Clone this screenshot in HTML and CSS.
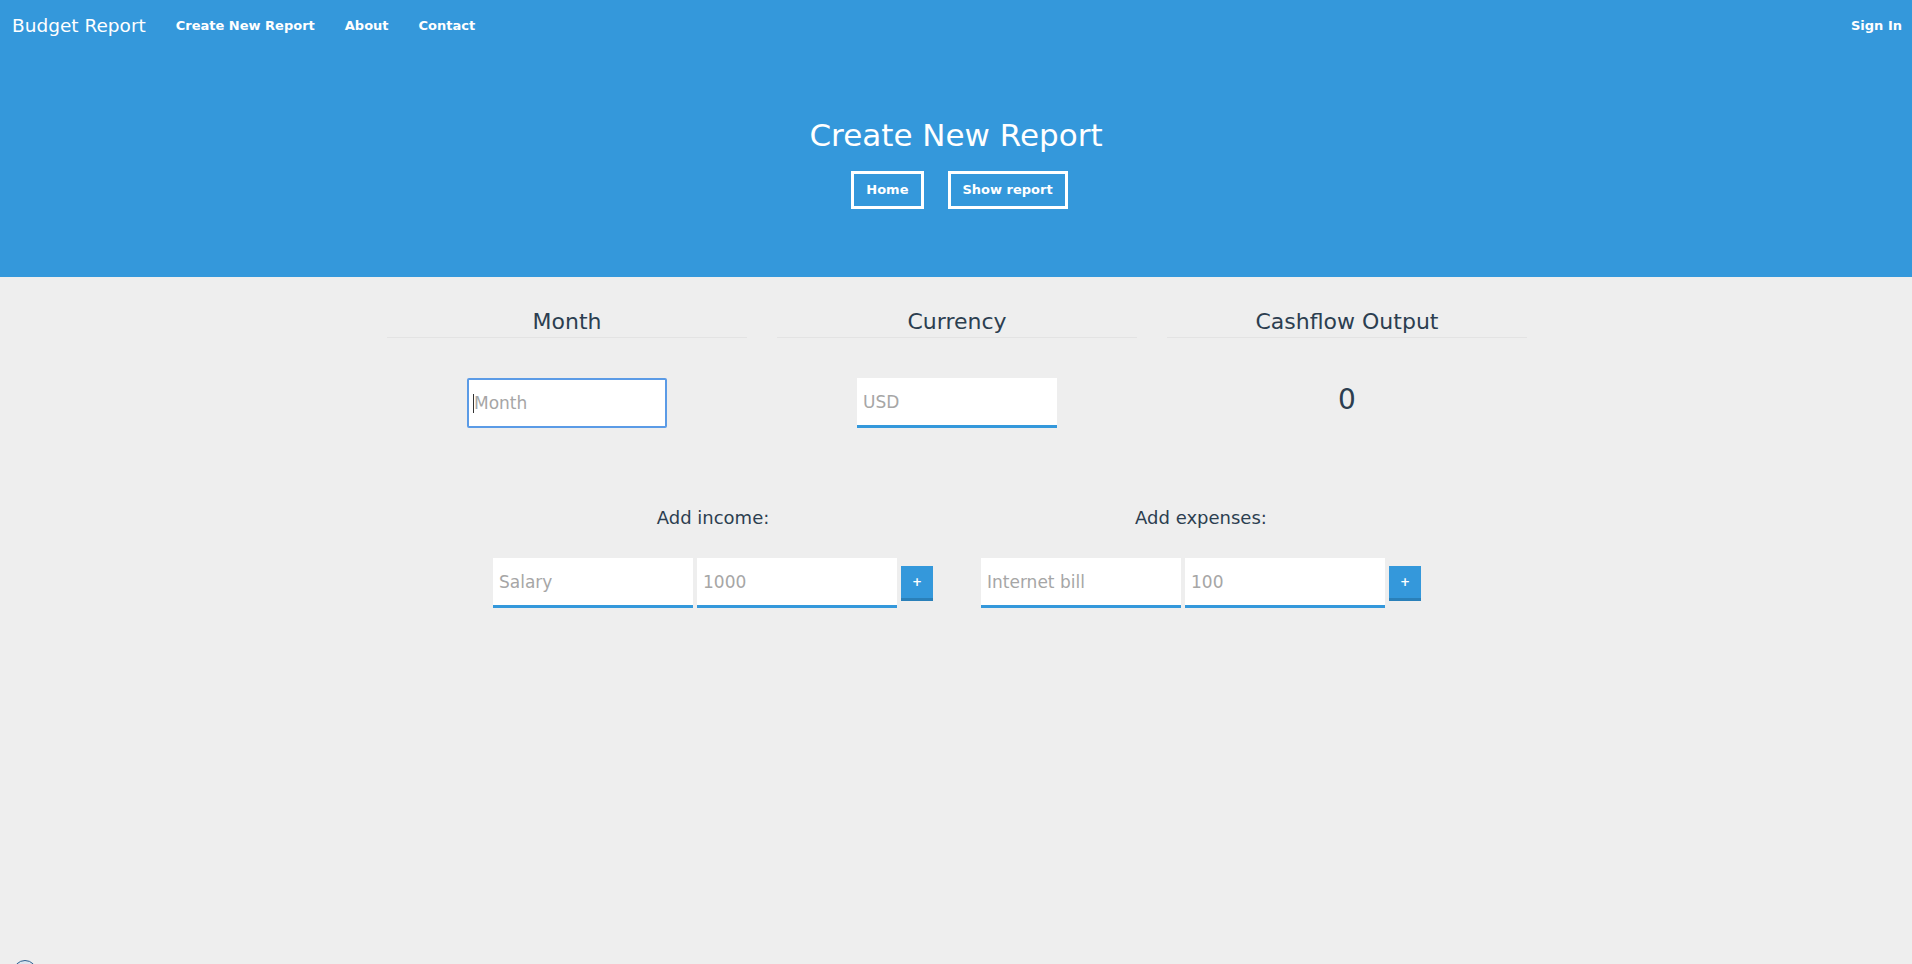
FILE: index.html
```html
<!DOCTYPE html>
<html lang="en">
<head>
<meta charset="utf-8">
<title>Budget Report</title>
<link rel="stylesheet" href="styles.css">
</head>
<body>
<header class="hero">
  <nav class="navbar">
    <a class="brand" href="#">Budget Report</a>
    <ul class="nav-links">
      <li><a href="#">Create New Report</a></li>
      <li><a href="#">About</a></li>
      <li><a href="#">Contact</a></li>
    </ul>
    <a class="sign-in" href="#">Sign In</a>
  </nav>
  <div class="hero-body">
    <h1 class="hero-title">Create New Report</h1>
    <div class="hero-actions">
      <a class="btn-outline" href="#">Home</a>
      <a class="btn-outline" href="#">Show report</a>
    </div>
  </div>
</header>

<main class="main">
  <section class="summary">
    <div class="summary-col">
      <h3 class="col-title">Month</h3>
      <div class="col-body">
        <span class="focus-wrap"><input class="field field-focused" type="text" placeholder="Month"></span>
      </div>
    </div>
    <div class="summary-col">
      <h3 class="col-title">Currency</h3>
      <div class="col-body">
        <input class="field" type="text" placeholder="USD">
      </div>
    </div>
    <div class="summary-col">
      <h3 class="col-title">Cashflow Output</h3>
      <div class="col-body">
        <span class="cashflow">0</span>
      </div>
    </div>
  </section>

  <section class="entries">
    <div class="entry-col">
      <p class="entry-label">Add income:</p>
      <div class="entry-row">
        <input class="field" type="text" placeholder="Salary">
        <input class="field" type="text" placeholder="1000">
        <button class="btn-add" type="button">+</button>
      </div>
    </div>
    <div class="entry-col">
      <p class="entry-label">Add expenses:</p>
      <div class="entry-row">
        <input class="field" type="text" placeholder="Internet bill">
        <input class="field" type="text" placeholder="100">
        <button class="btn-add" type="button">+</button>
      </div>
    </div>
  </section>
</main>

<div class="chat-bubble"></div>
</body>
</html>
```

FILE: styles.css
```css
* {
  box-sizing: border-box;
}

html, body {
  margin: 0;
  padding: 0;
  height: 100%;
}

body {
  background: #eeeeee;
  font-family: "DejaVu Sans", "Liberation Sans", sans-serif;
  color: #2c3e50;
  overflow: hidden;
}

a {
  text-decoration: none;
  color: inherit;
}

/* ---------- header ---------- */
.hero {
  background: #3498db;
  color: #ffffff;
  height: 277px;
}

.navbar {
  height: 50px;
  display: flex;
  align-items: center;
  padding: 0 10px 0 12px;
}

.brand {
  font-size: 18.5px;
  padding-right: 15px;
}

.nav-links {
  display: flex;
  list-style: none;
  margin: 0;
  padding: 0;
}

.nav-links a {
  display: block;
  padding: 0 15px;
  font-size: 13px;
  font-weight: bold;
}

.sign-in {
  margin-left: auto;
  font-size: 13px;
  font-weight: bold;
}

.hero-body {
  display: flex;
  flex-direction: column;
  align-items: center;
  padding-top: 67px;
}

.hero-title {
  margin: 0;
  font-size: 31px;
  line-height: 36px;
  font-weight: normal;
}

.hero-actions {
  display: flex;
  gap: 24px;
  margin-top: 18px;
  padding-left: 7px;
}

.btn-outline {
  display: block;
  border: 3px solid #ffffff;
  height: 38px;
  line-height: 32px;
  padding: 0 12px;
  font-size: 13px;
  font-weight: bold;
}

/* ---------- main ---------- */
.main {
  padding-left: 2px;
}

.summary {
  width: 1140px;
  margin: 0 auto;
  display: flex;
  gap: 30px;
}

.summary-col {
  width: 360px;
}

.col-title {
  margin: 32px 0 0;
  font-size: 22px;
  line-height: 26px;
  font-weight: normal;
  text-align: center;
  padding-bottom: 2px;
  border-bottom: 1px solid #e3e3e3;
}

.col-body {
  margin-top: 40px;
  height: 50px;
  display: flex;
  justify-content: center;
  align-items: center;
}

.field {
  width: 200px;
  height: 50px;
  border: none;
  border-bottom: 3px solid #3498db;
  background: #ffffff;
  padding: 0 6px;
  font-family: inherit;
  font-size: 17px;
  color: #2c3e50;
  outline: none;
  border-radius: 0;
}

.field::placeholder {
  color: #a6a6a6;
}

.focus-wrap {
  position: relative;
  display: block;
}

.focus-wrap::after {
  content: "";
  position: absolute;
  left: 6px;
  top: 16px;
  width: 1px;
  height: 19px;
  background: #333333;
}

.field-focused {
  border: 2px solid #5b9be6;
  border-radius: 2px;
  padding-left: 5px;
}

.cashflow {
  font-size: 28px;
  line-height: 44px;
  margin-top: -6px;
}

.entries {
  width: 976px;
  margin: 78px auto 0;
  display: flex;
}

.entry-col {
  width: 488px;
  display: flex;
  flex-direction: column;
  align-items: center;
}

.entry-label {
  margin: 0;
  font-size: 18px;
  line-height: 24px;
}

.entry-row {
  margin-top: 28px;
  display: flex;
  align-items: center;
  gap: 4px;
}

.btn-add {
  width: 32px;
  height: 35px;
  border: none;
  border-bottom: 3px solid #2a80b9;
  background: #3498db;
  color: #ffffff;
  font-family: inherit;
  font-size: 12px;
  font-weight: bold;
  padding: 0;
  cursor: pointer;
}

.chat-bubble {
  position: fixed;
  left: 13px;
  bottom: -20px;
  width: 24px;
  height: 24px;
  border-radius: 50%;
  border: 1.5px solid #2d5f8f;
  background: #dbe4ee;
}
```
